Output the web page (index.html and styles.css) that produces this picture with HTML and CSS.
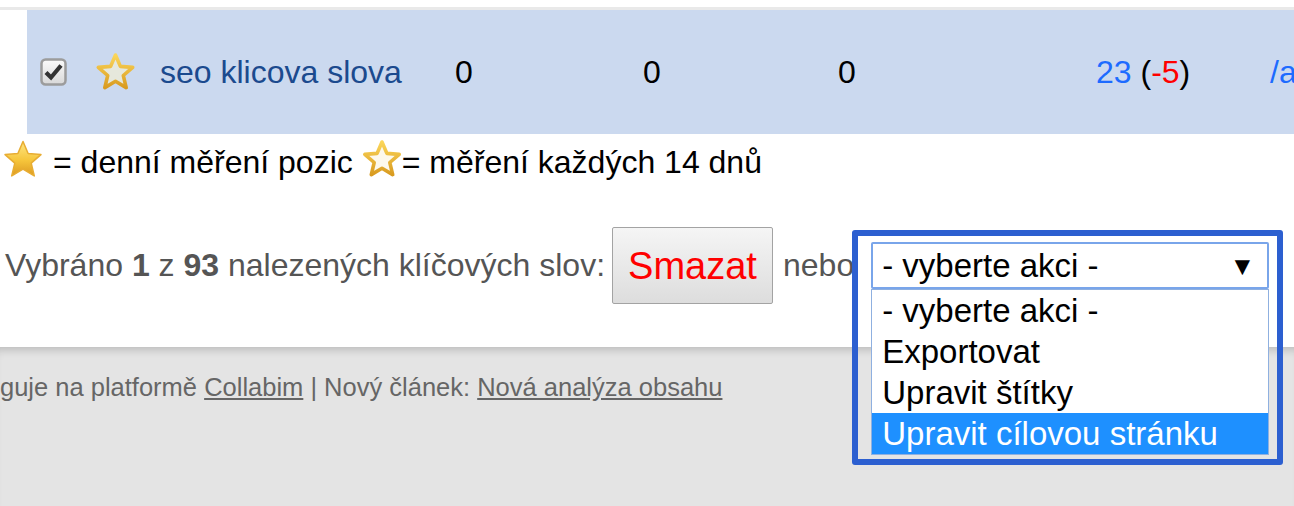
FILE: index.html
```html
<!DOCTYPE html>
<html lang="cs">
<head>
<meta charset="utf-8">
<title>Klíčová slova</title>
<link rel="stylesheet" href="styles.css">
</head>
<body>
<div class="main">
  <div class="table">
    <div class="row">
      <div class="cell">
        <svg class="check" width="27" height="28" viewBox="0 0 27 28">
          <defs>
            <linearGradient id="cb" x1="0" y1="0" x2="0" y2="1">
              <stop offset="0" stop-color="#fbfbfb"/>
              <stop offset="1" stop-color="#d8d8d8"/>
            </linearGradient>
          </defs>
          <rect x="1.5" y="1.5" width="24" height="25" rx="4" fill="url(#cb)" stroke="#9c9c9c" stroke-width="2.5"/>
          <path d="M6 14.5 L11 19.5 L21 7.5" fill="none" stroke="#333" stroke-width="4.2" stroke-linejoin="miter" stroke-linecap="butt"/>
        </svg>
      </div>
      <div class="cell">
        <svg class="star" width="41" height="40" viewBox="0 0 40 40">
          <defs>
            <linearGradient id="so" x1="0" y1="0" x2="0" y2="1">
              <stop offset="0" stop-color="#fbd65a"/>
              <stop offset="1" stop-color="#d99b20"/>
            </linearGradient>
          </defs>
          <polygon points="20,3 24.9,14.4 37.2,15.4 27.8,23.5 30.7,35.6 20,29.2 9.3,35.6 12.2,23.5 2.8,15.4 15.1,14.4" fill="#e6e8dc" stroke="url(#so)" stroke-width="3.6" stroke-linejoin="round"/>
        </svg>
      </div>
      <div class="cell text keyword">seo klicova slova</div>
      <div class="cell text">0</div>
      <div class="cell text">0</div>
      <div class="cell text">0</div>
      <div class="cell text"><span class="blue">23</span> (<span class="red">-5</span>)</div>
      <div class="cell text blue">/a</div>
    </div>
  </div>

  <div class="legend">
    <svg class="star" width="42" height="41" viewBox="0 0 40 40">
      <defs>
        <linearGradient id="sf" x1="0" y1="0" x2="0" y2="1">
          <stop offset="0" stop-color="#ffe783"/>
          <stop offset="0.55" stop-color="#f6c53b"/>
          <stop offset="1" stop-color="#dc9a22"/>
        </linearGradient>
      </defs>
      <polygon points="20,2.5 25,14.2 37.5,15.2 28,23.6 31,36 20,29.4 9,36 12,23.6 2.5,15.2 15,14.2" fill="url(#sf)" stroke="#e8ad33" stroke-width="1.5" stroke-linejoin="round"/>
    </svg>
    <span class="legend-text">= denní měření pozic</span>
    <svg class="star star-two" width="40" height="40" viewBox="0 0 40 40">
      <defs>
        <linearGradient id="so2" x1="0" y1="0" x2="0" y2="1">
          <stop offset="0" stop-color="#fbd65a"/>
          <stop offset="1" stop-color="#d99b20"/>
        </linearGradient>
      </defs>
      <polygon points="20,3 24.9,14.4 37.2,15.4 27.8,23.5 30.7,35.6 20,29.2 9.3,35.6 12.2,23.5 2.8,15.4 15.1,14.4" fill="#fdf9ec" stroke="url(#so2)" stroke-width="3.6" stroke-linejoin="round"/>
    </svg>
    <span class="legend-text tight">= měření každých 14 dnů</span>
  </div>

  <div class="actions">
    <span class="selected">Vybráno <b>1</b> z <b>93</b> nalezených klíčových slov:</span>
    <button class="btn" type="button">Smazat</button>
    <span class="or">nebo</span>
    <div class="select">
      <span class="select-value">- vyberte akci -</span>
      <span class="arrow">▼</span>
      <div class="options">
        <div class="option">- vyberte akci -</div>
        <div class="option">Exportovat</div>
        <div class="option">Upravit štítky</div>
        <div class="option active">Upravit cílovou stránku</div>
      </div>
      <div class="highlight"></div>
    </div>
  </div>
</div>

<footer class="footer">
  <p class="footer-text">guje na platformě <a href="#">Collabim</a> | Nový článek: <a href="#">Nová analýza obsahu</a></p>
</footer>
</body>
</html>
```

FILE: styles.css
```css
html, body {
  margin: 0;
  padding: 0;
}

body {
  font-family: "Liberation Sans", Arial, sans-serif;
  background: #e4e4e4;
  width: 1294px;
  overflow: hidden;
}

.main {
  background: #ffffff;
  height: 347px;
  padding-top: 7px;
  box-sizing: border-box;
}

.table {
  border-top: 3px solid #e9e9e9;
}

.row {
  margin-left: 27px;
  height: 124px;
  background: #cbd9ef;
  display: grid;
  grid-template-columns: 55px 65px 295px 188px 195px 258px 174px 1fr;
  padding-left: 13px;
  align-items: center;
  font-size: 32px;
  color: #000;
  white-space: nowrap;
  overflow: hidden;
}

.cell {
  display: flex;
  align-items: center;
}

.cell.text {
  display: block;
  line-height: 1.15;
}

.check {
  display: block;
  margin-top: -1px;
}

.star {
  display: block;
}

.keyword {
  color: #1b4a8e;
}

.blue {
  color: #1d6bff;
}

.red {
  color: #ff0000;
}

.legend {
  display: flex;
  align-items: center;
  height: 46px;
  padding-left: 2px;
  margin-top: 2px;
  font-size: 32px;
  color: #000;
  white-space: nowrap;
}

.legend-text {
  margin-left: 9px;
  margin-top: 6px;
}

.legend-text.tight {
  margin-left: 0;
}

.star-two {
  margin-left: 9px;
}

.actions {
  display: flex;
  align-items: center;
  height: 77px;
  margin-top: 45px;
  padding-left: 5px;
  font-size: 32px;
  color: #555555;
  white-space: nowrap;
}

.selected b {
  font-weight: bold;
}

.btn {
  margin-left: 7px;
  height: 77px;
  width: 161px;
  padding: 0;
  border: 1px solid #a3a3a3;
  border-radius: 2px;
  background: linear-gradient(#f5f5f5, #dddddd);
  color: #ff0000;
  font-family: "Liberation Sans", Arial, sans-serif;
  font-size: 38px;
  line-height: 1;
}

.or {
  margin-left: 10px;
}

.select {
  position: relative;
  margin-left: 17px;
  width: 398px;
  height: 47px;
  box-sizing: border-box;
  border: 2px solid #79a5ea;
  border-radius: 2px;
  background: #ffffff;
  display: flex;
  align-items: center;
  justify-content: space-between;
  padding: 0 12px 0 9px;
  color: #000;
  font-size: 33px;
}

.arrow {
  font-size: 26px;
  line-height: 1;
}

.options {
  position: absolute;
  left: -2px;
  top: 45px;
  width: 398px;
  height: 166px;
  box-sizing: border-box;
  border: 1px solid #8fb0e0;
  background: #ffffff;
  z-index: 2;
}

.option {
  height: 41px;
  line-height: 41px;
  padding-left: 10px;
  color: #000;
}

.option.active {
  background: #1e90ff;
  color: #ffffff;
  height: 41px;
}

.highlight {
  position: absolute;
  left: -21px;
  top: -14px;
  width: 431px;
  height: 235px;
  box-sizing: border-box;
  border: 6px solid #2c5fd0;
  border-radius: 3px;
  z-index: 3;
  pointer-events: none;
}

.footer {
  height: 159px;
  background: #e4e4e4;
  box-shadow: inset 0 9px 8px -6px rgba(0, 0, 0, 0.18);
  padding-top: 25px;
  box-sizing: border-box;
}

.footer-text {
  margin: 0;
  font-size: 25.5px;
  line-height: 30px;
  color: #666666;
  white-space: nowrap;
}

.footer-text a {
  color: #666666;
  text-decoration: underline;
}
```
